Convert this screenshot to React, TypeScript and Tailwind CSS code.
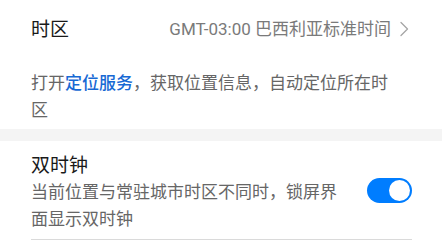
const font = { fontFamily: '"Roboto", "Noto Sans CJK SC", sans-serif' };

function Chevron() {
  return (
    <svg width="9" height="16" viewBox="0 0 9 16" fill="none" className="shrink-0">
      <path d="M1 1.5 L7.5 8 L1 14.5" stroke="#a6a6a6" strokeWidth="1.3" strokeLinecap="round" strokeLinejoin="round" />
    </svg>
  );
}

function Toggle({ on }: { on: boolean }) {
  return (
    <div
      className={`flex h-[25px] w-[45px] shrink-0 items-center rounded-full p-[2px] ${
        on ? "justify-end bg-[#007dff]" : "justify-start bg-[#d9d9d9]"
      }`}
    >
      <div className="h-[21px] w-[21px] rounded-full bg-white" />
    </div>
  );
}

export default function App() {
  return (
    <div className="h-[248px] w-[442px] overflow-hidden bg-white" style={font}>
      <section className="pb-[5px] pl-[31px]">
        <div className="flex h-[58px] items-center pr-[33px]">
          <span className="text-[19px] leading-[27px] text-[#191919]">时区</span>
          <div className="ml-auto flex items-center gap-[9px]">
            <span className="text-[17px] leading-[27px] text-[#7a7a7a]">GMT-03:00 巴西利亚标准时间</span>
            <Chevron />
          </div>
        </div>
        <p className="mt-[12px] pr-[46px] text-[17px] leading-[27px] text-[#666666]">
          打开<span className="font-medium text-[#1769d4]">定位服务</span>，获取位置信息，自动定位所在时区
        </p>
      </section>

      <div className="h-[12px] bg-[#f4f4f4]" />

      <section className="pl-[31px] pr-[30px] pt-[11px]">
        <div className="flex items-center gap-[24px] border-b border-[#dadada] pb-[6px]">
          <div className="flex-1">
            <div className="text-[19px] leading-[27px] text-[#191919]">双时钟</div>
            <p className="text-[17px] leading-[27px] text-[#666666]">
              当前位置与常驻城市时区不同时，锁屏界面显示双时钟
            </p>
          </div>
          <div className="mt-[-4px]">
            <Toggle on />
          </div>
        </div>
      </section>
    </div>
  );
}
